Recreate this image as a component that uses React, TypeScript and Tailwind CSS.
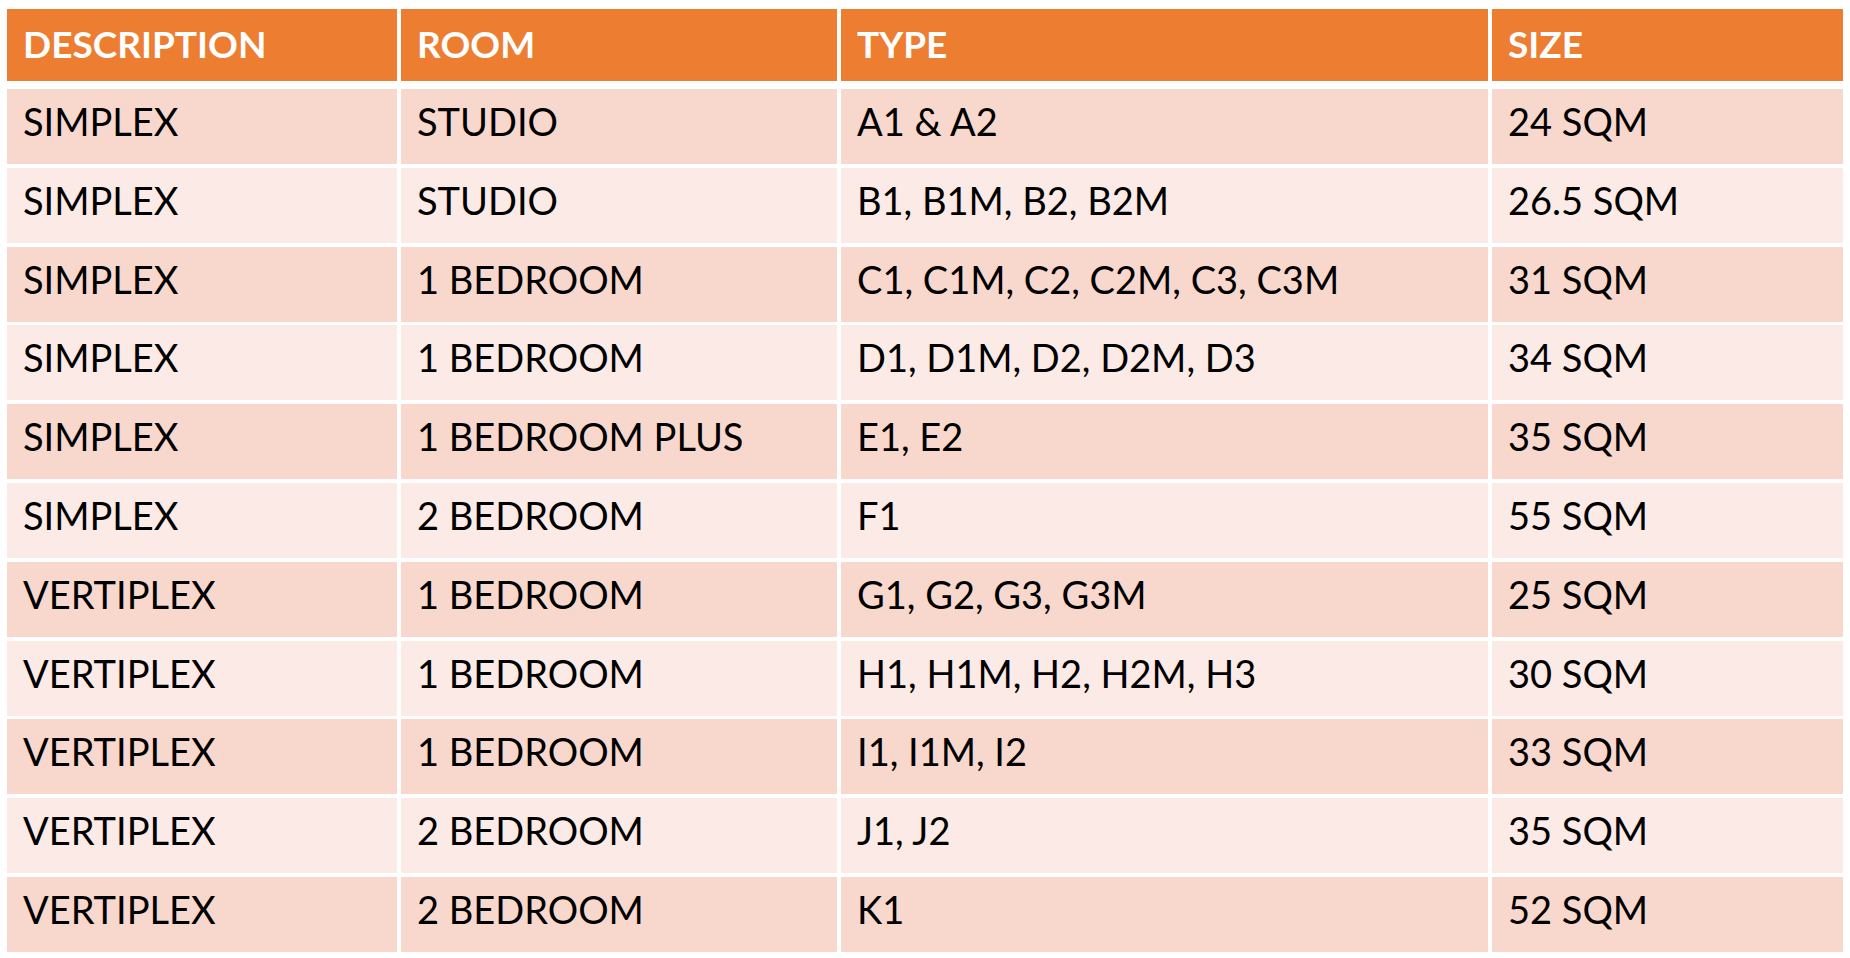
import React from "react";

const rows: [string, string, string, string][] = [
  ["SIMPLEX", "STUDIO", "A1 & A2", "24 SQM"],
  ["SIMPLEX", "STUDIO", "B1, B1M, B2, B2M", "26.5 SQM"],
  ["SIMPLEX", "1 BEDROOM", "C1, C1M, C2, C2M, C3, C3M", "31 SQM"],
  ["SIMPLEX", "1 BEDROOM", "D1, D1M, D2, D2M, D3", "34 SQM"],
  ["SIMPLEX", "1 BEDROOM PLUS", "E1, E2", "35 SQM"],
  ["SIMPLEX", "2 BEDROOM", "F1", "55 SQM"],
  ["VERTIPLEX", "1 BEDROOM", "G1, G2, G3, G3M", "25 SQM"],
  ["VERTIPLEX", "1 BEDROOM", "H1, H1M, H2, H2M, H3", "30 SQM"],
  ["VERTIPLEX", "1 BEDROOM", "I1, I1M, I2", "33 SQM"],
  ["VERTIPLEX", "2 BEDROOM", "J1, J2", "35 SQM"],
  ["VERTIPLEX", "2 BEDROOM", "K1", "52 SQM"],
];

const headers = ["DESCRIPTION", "ROOM", "TYPE", "SIZE"];

export default function App() {
  return (
    <div
      className="w-[1850px] h-[958px] bg-white pt-[9px] pl-[7px] overflow-hidden"
      style={{ fontFamily: "Lato, 'Open Sans', sans-serif" }}
    >
      <div className="w-[1836px]">
        <div className="grid grid-cols-[390px_436px_647px_351px] gap-x-[4px] mb-[8px]">
          {headers.map((h) => (
            <div
              key={h}
              className="h-[72px] bg-[#ED7D31] text-white font-bold text-[37px] leading-[47px] pl-[16px] pt-[11px]"
            >
              {h}
            </div>
          ))}
        </div>
        <div className="flex flex-col gap-y-[3.8px]">
          {rows.map((r, i) => (
            <div
              key={i}
              className="grid grid-cols-[390px_436px_647px_351px] gap-x-[4px]"
            >
              {r.map((c, j) => (
                <div
                  key={j}
                  className={`h-[75px] text-black text-[38px] leading-[47px] pl-[16px] pt-[9px] ${
                    i % 2 === 0 ? "bg-[#F8D7CD]" : "bg-[#FBEAE5]"
                  }`}
                >
                  {c}
                </div>
              ))}
            </div>
          ))}
        </div>
      </div>
    </div>
  );
}
